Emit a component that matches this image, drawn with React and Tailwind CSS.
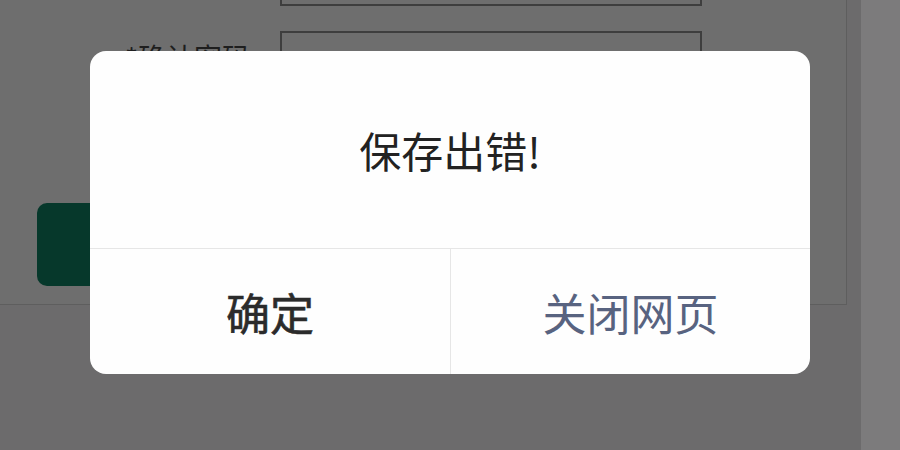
import React from 'react';

const font = { fontFamily: '"Noto Sans CJK SC", "Noto Sans", sans-serif' };

const App = () => {
  return (
    <div
      className="relative w-[900px] h-[450px] overflow-hidden bg-[#6c6b6c] flex"
      style={font}
    >
      {/* dimmed page behind the alert */}
      <div className="w-[861px] shrink-0">
        <div className="w-[847px] h-[305px] bg-[#6e6e6e] border-r border-b border-[#5e5e5e] flex flex-col">
          <div className="ml-[280px] -mt-[40px] w-[422px] h-[46px] border-2 border-[#3e3e3e]" />

          <div className="mt-[25px] flex items-center">
            <label className="w-[250px] text-right text-[28px] leading-none text-[#1e1e1e]">
              *确认密码
            </label>
            <div className="ml-[30px] w-[422px] h-[52px] border-2 border-[#3e3e3e]" />
          </div>

          <button className="mt-[120px] ml-[37px] w-[740px] h-[83px] rounded-[10px] bg-[#06382b]" />
        </div>
      </div>
      <div className="flex-1 bg-[#7c7b7c]" />

      {/* alert dialog */}
      <div className="absolute left-[90px] top-[51px] w-[720px] h-[323px] rounded-[16px] bg-[#fefefe] flex flex-col overflow-hidden">
        <div className="h-[197px] flex items-center justify-center">
          <p className="text-[42px] leading-none text-[#222]">保存出错!</p>
        </div>
        <div className="flex-1 grid grid-cols-2 border-t border-[#e6e6e6]">
          <button className="flex items-center justify-center text-[44px] leading-none text-[#2b2b2b] [-webkit-text-stroke:0.6px_#2b2b2b]">
            确定
          </button>
          <button className="flex items-center justify-center border-l border-[#e6e6e6] text-[44px] leading-none text-[#586380]">
            关闭网页
          </button>
        </div>
      </div>
    </div>
  );
};

export default App;
